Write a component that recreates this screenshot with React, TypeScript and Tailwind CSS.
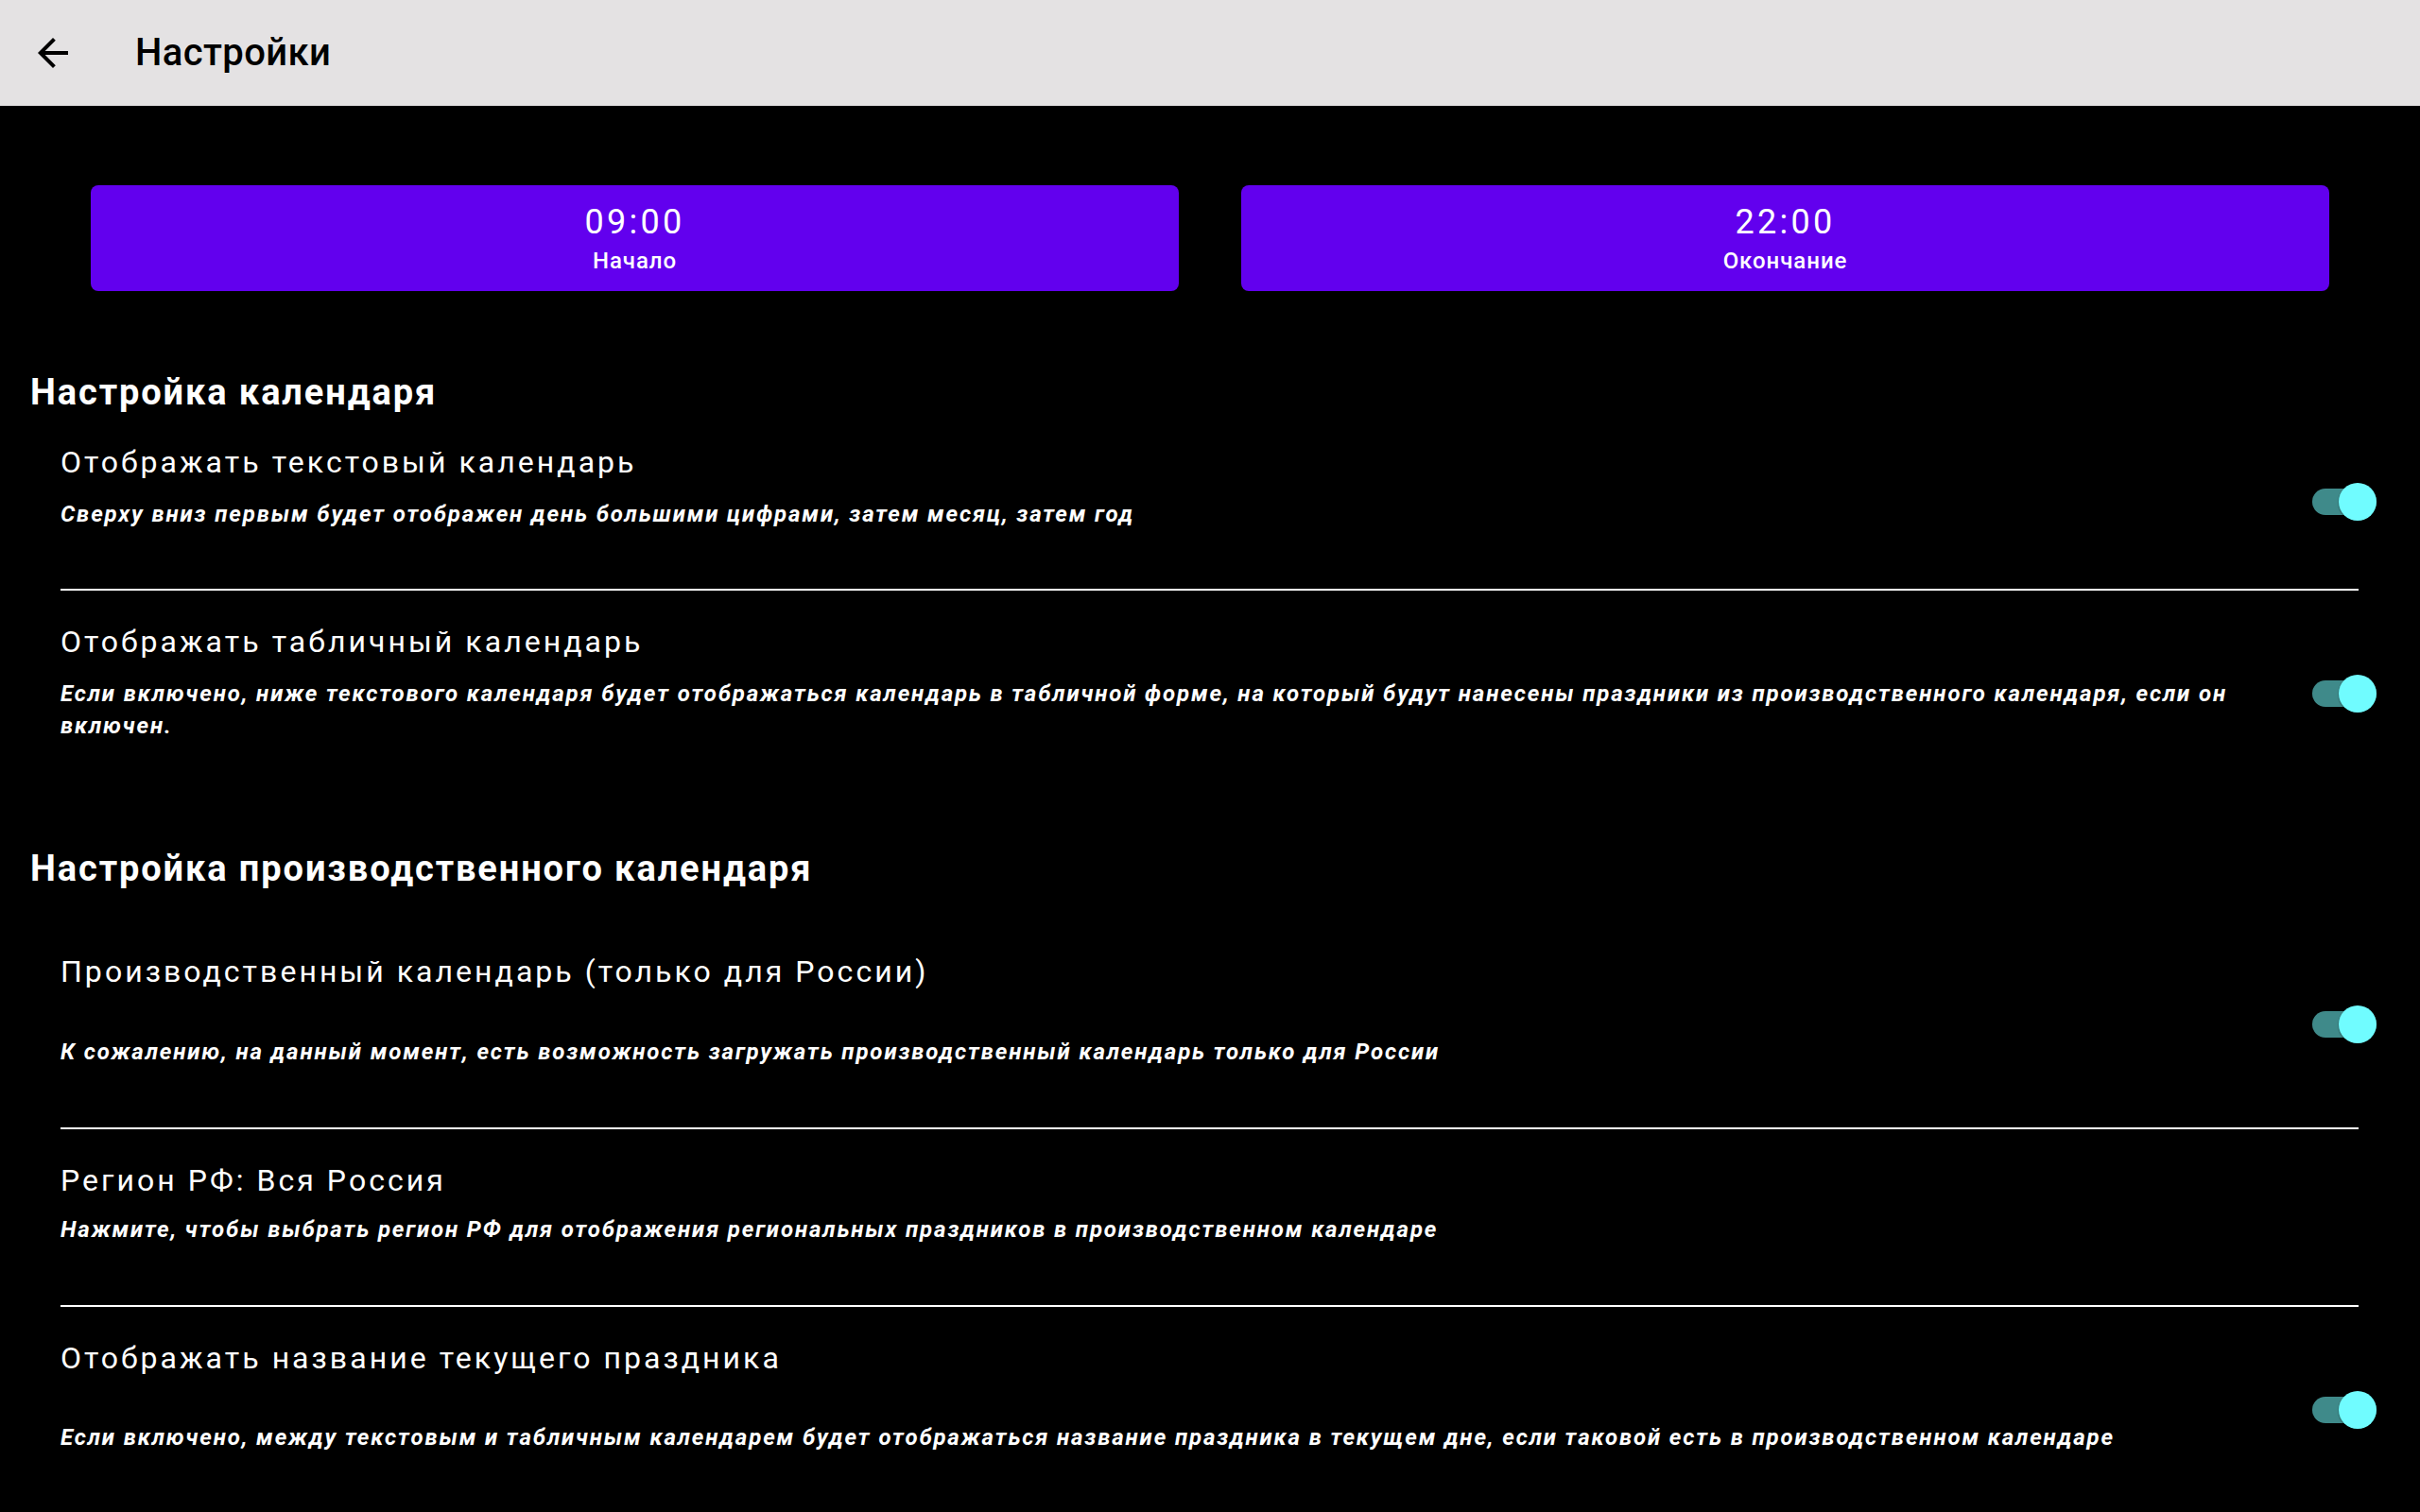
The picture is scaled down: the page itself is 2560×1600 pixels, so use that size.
import React from "react";

const font = { fontFamily: "Roboto, 'Noto Sans', sans-serif" };

const Toggle: React.FC = () => (
  <div className="relative w-[68px] h-[40px] shrink-0">
    <div className="absolute left-0 top-[6px] h-[28px] w-full rounded-full bg-[#3f8a8a]" />
    <div className="absolute right-0 top-0 h-[40px] w-[40px] rounded-full bg-[#70fcff] shadow-[0_1px_2px_rgba(0,0,0,0.4)]" />
  </div>
);

type RowProps = {
  title: string;
  summary: string;
  gap: string;
  pad: string;
  toggle?: boolean;
};

const Row: React.FC<RowProps> = ({ title, summary, gap, pad, toggle }) => (
  <div className="flex items-center pl-[32px]">
    <div className={`flex-1 min-w-0 pr-[40px] ${pad}`}>
      <div className="text-[32px] leading-[44px] tracking-[0.095em] text-white">{title}</div>
      <div className={`${gap} text-[24px] leading-[34px] font-bold italic tracking-[0.078em] text-white`}>{summary}</div>
    </div>
    {toggle && (
      <div className="mr-[14px]">
        <Toggle />
      </div>
    )}
  </div>
);

const Divider: React.FC = () => <div className="ml-[32px] mr-[33px] h-[2px] bg-white" />;

export default function App() {
  return (
    <div className="w-[2560px] h-[1600px] overflow-hidden bg-black" style={font}>
      {/* Toolbar */}
      <div className="h-[112px] bg-[#e4e2e3] flex items-center">
        <div className="ml-[32px] w-[48px] h-[48px]">
          <svg viewBox="0 0 24 24" width="48" height="48" fill="#000">
            <path d="M20 11H7.83l5.59-5.59L12 4l-8 8 8 8 1.41-1.41L7.83 13H20v-2z" />
          </svg>
        </div>
        <div className="ml-[63px] text-[40px] font-medium text-black tracking-[0.01em]">Настройки</div>
      </div>

      {/* Time buttons */}
      <div className="mt-[84px] px-[96px] flex gap-[66px]">
        <button className="flex-1 h-[112px] rounded-[8px] bg-[#6200ee] flex flex-col items-center justify-center text-white">
          <span className="text-[36px] leading-[40px] tracking-[0.09em]">09:00</span>
          <span className="text-[24px] leading-[28px] font-medium tracking-[0.04em] mt-[7px]">Начало</span>
        </button>
        <button className="flex-1 h-[112px] rounded-[8px] bg-[#6200ee] flex flex-col items-center justify-center text-white">
          <span className="text-[36px] leading-[40px] tracking-[0.09em]">22:00</span>
          <span className="text-[24px] leading-[28px] font-medium tracking-[0.04em] mt-[7px]">Окончание</span>
        </button>
      </div>

      <div className="px-[32px]">
        {/* Calendar section */}
        <div className="mt-[83px] text-[38px] leading-[48px] font-bold tracking-[0.05em] text-white">Настройка календаря</div>
        <Row
          title="Отображать текстовый календарь"
          summary="Сверху вниз первым будет отображен день большими цифрами, затем месяц, затем год"
          gap="mt-[16px]"
          pad="pt-[28px] pb-[62px]"
          toggle
        />
        <Divider />
        <Row
          title="Отображать табличный календарь"
          summary="Если включено, ниже текстового календаря будет отображаться календарь в табличной форме, на который будут нанесены праздники из производственного календаря, если он включен."
          gap="mt-[16px]"
          pad="pt-[32px] pb-[58px]"
          toggle
        />

        {/* Production calendar section */}
        <div className="mt-[52px] mb-[31px] text-[38px] leading-[48px] font-bold tracking-[0.05em] text-white">
          Настройка производственного календаря
        </div>
        <Row
          title="Производственный календарь (только для России)"
          summary="К сожалению, на данный момент, есть возможность загружать производственный календарь только для России"
          gap="mt-[46px]"
          pad="pt-[32px] pb-[63px]"
          toggle
        />
        <Divider />
        <Row
          title="Регион РФ: Вся Россия"
          summary="Нажмите, чтобы выбрать регион РФ для отображения региональных праздников в производственном календаре"
          gap="mt-[13px]"
          pad="pt-[32px] pb-[63px]"
        />
        <Divider />
        <Row
          title="Отображать название текущего праздника"
          summary="Если включено, между текстовым и табличным календарем будет отображаться название праздника в текущем дне, если таковой есть в производственном календаре"
          gap="mt-[45px]"
          pad="pt-[32px] pb-[63px]"
          toggle
        />
      </div>
    </div>
  );
}
